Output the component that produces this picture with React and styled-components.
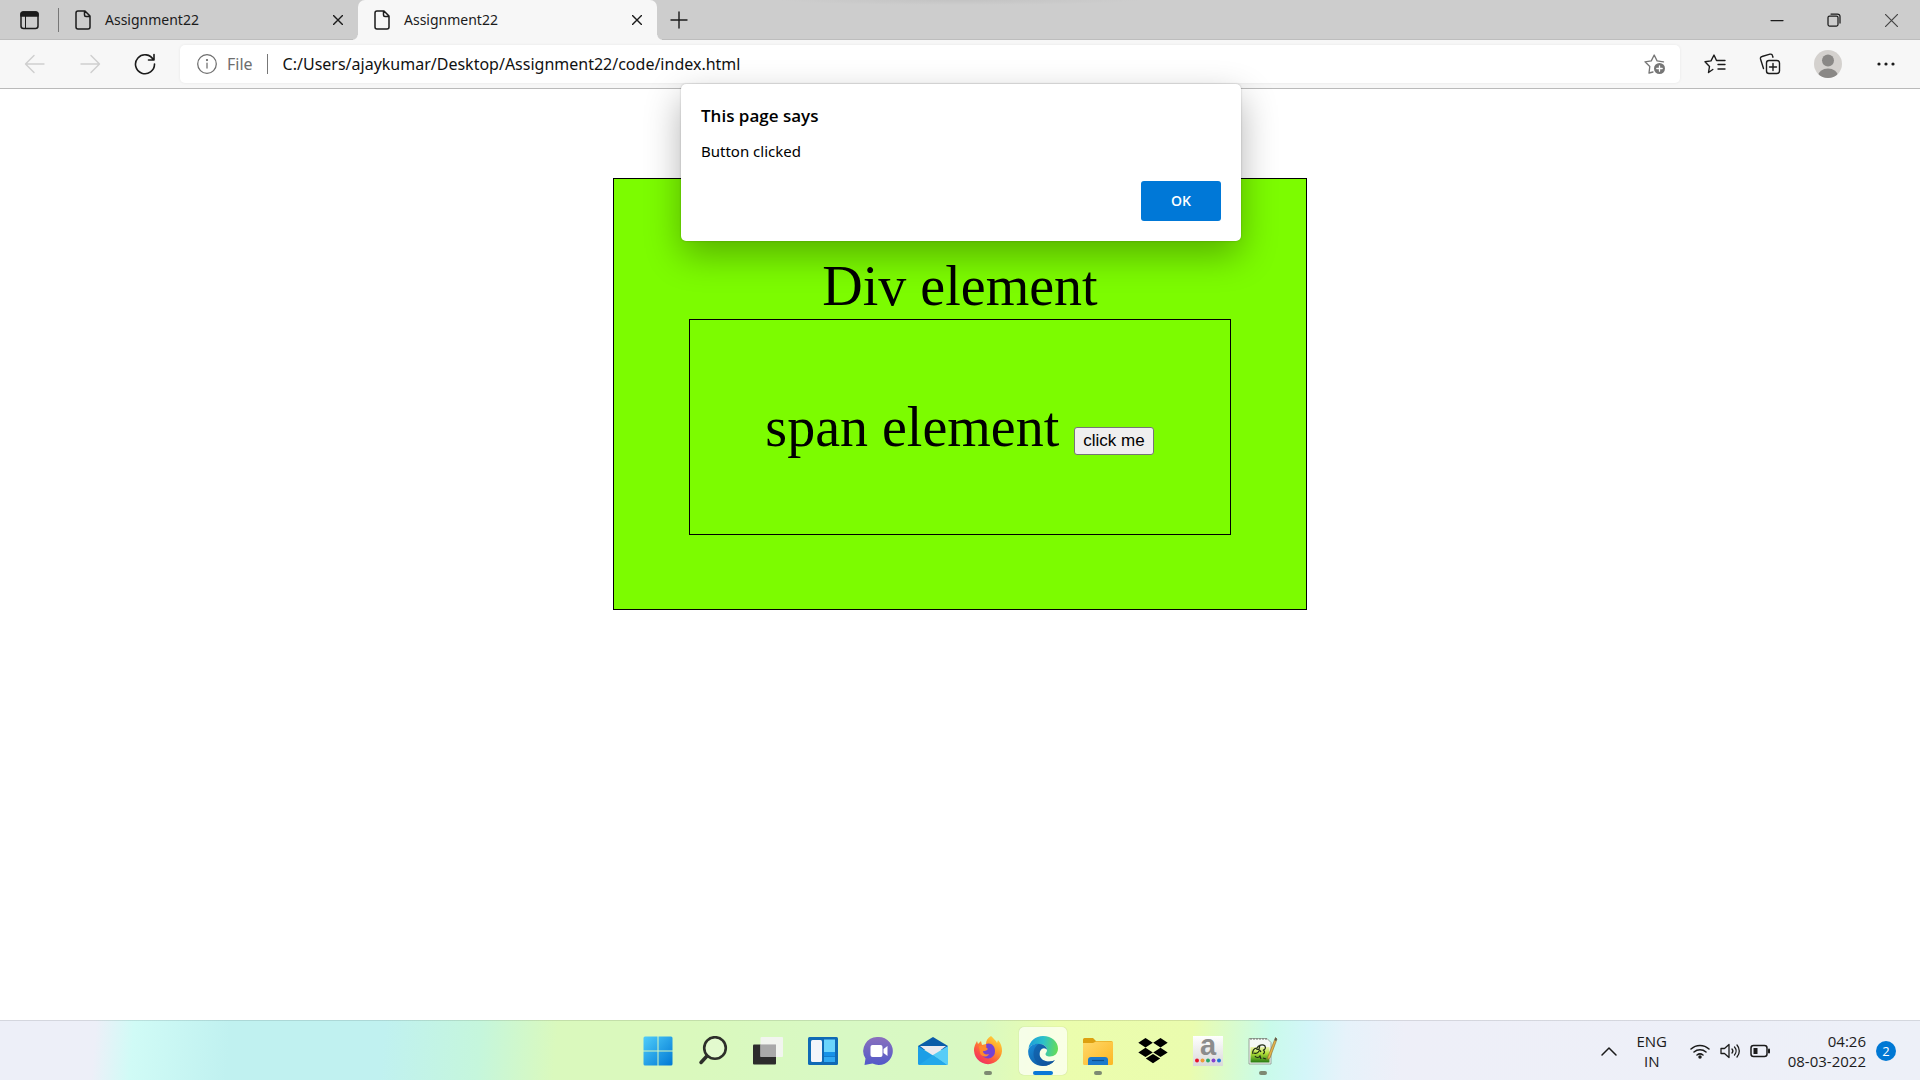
import React from "react";
import styled, { createGlobalStyle } from "styled-components";

const UI = `"Noto Sans", "Open Sans", sans-serif`;
const UI_ALT = `"Open Sans", "Noto Sans", sans-serif`;

const GlobalStyle = createGlobalStyle`
  *, *::before, *::after { box-sizing: border-box; }
  body { margin: 0; background: #fff; color: #1b1b1b; font-family: ${UI}; }
  button { font: inherit; color: inherit; }
`;

const Screen = styled.div`
  display: flex;
  flex-direction: column;
  min-height: 100vh;
`;

/* ---------- browser chrome ---------- */
const TabStrip = styled.header`
  display: flex;
  height: 40px;
  background: radial-gradient(180px 5px at 50% 0, #c3c3c3, #cdcdcd);
  box-shadow: inset 0 -1px 0 #bdbdbd;
`;

const IconButton = styled.button`
  display: flex;
  align-items: center;
  justify-content: center;
  flex: none;
  width: ${(p) => p.$w || 40}px;
  padding: 0;
  border: 0;
  background: none;
  color: ${(p) => p.$color || "#1b1b1b"};
`;

const StripDivider = styled.span`
  align-self: center;
  width: 1px;
  height: 24px;
  background: #777;
`;

const Tab = styled.div`
  position: relative;
  display: flex;
  align-items: center;
  width: 299px;
  padding-left: 14px;
  padding-right: 3px;
  border-radius: 7px 7px 0 0;
  background: ${(p) => (p.$active ? "#f7f7f7" : "transparent")};

  &::before,
  &::after {
    content: "";
    display: ${(p) => (p.$active ? "block" : "none")};
    position: absolute;
    bottom: 0;
    width: 5px;
    height: 5px;
  }
  &::before {
    right: 100%;
    background: radial-gradient(circle at 0 0, transparent 4px, #f7f7f7 5px);
  }
  &::after {
    left: 100%;
    background: radial-gradient(circle at 100% 0, transparent 4px, #f7f7f7 5px);
  }
`;

const TabTitle = styled.span`
  flex: 1;
  padding-left: 12px;
  font-size: 14px;
  line-height: 20px;
`;

const WindowControls = styled.div`
  display: flex;
  margin-left: auto;
`;

const Toolbar = styled.div`
  display: flex;
  align-items: center;
  height: 49px;
  padding: 0 8px;
  background: #f7f7f7;
  border-bottom: 1px solid #bababa;
`;

const ToolGroup = styled.div`
  display: flex;
  height: 38px;
`;

const AddressBar = styled.form`
  display: flex;
  flex: 1;
  align-items: center;
  height: 38px;
  margin: 0 7px 0 8px;
  padding-left: 17px;
  border-radius: 5px;
  background: #fff;
  box-shadow: 0 0 3px rgba(0, 0, 0, 0.07);
`;

const Scheme = styled.span`
  padding: 0 14px 0 10px;
  color: #6e6e6e;
  font-size: 16px;
`;

const SchemeDivider = styled.span`
  width: 1px;
  height: 20px;
  background: #777;
`;

const AddressInput = styled.input`
  flex: 1;
  min-width: 0;
  padding: 0 0 0 15px;
  border: 0;
  outline: 0;
  background: none;
  color: #111;
  font-family: ${UI};
  font-size: 16px;
  line-height: 22px;
`;

/* ---------- page ---------- */
const Page = styled.main`
  position: relative;
  flex: 1;
  padding-top: 89px;
  font-family: "Liberation Serif", "Times New Roman", serif;
  font-size: 56px;
  line-height: 65px;
  color: #000;
  text-align: center;
`;

const OuterBox = styled.div`
  width: fit-content;
  margin: 0 auto;
  padding: 75px 75px 74px;
  border: 1px solid #000;
  background: #7cfc00;
`;

const InnerBox = styled.div`
  padding: 75px 75px 74px;
  border: 1px solid #000;
`;

const ClickButton = styled.button`
  height: 28px;
  margin: 0 1px;
  padding: 0 8px;
  border: 1px solid #767676;
  border-radius: 3px;
  background: #efefef;
  color: #000;
  font-family: "Liberation Sans", Arial, sans-serif;
  font-size: 17px;
  line-height: 20px;
`;

const Dialog = styled.section`
  position: absolute;
  top: -5px;
  left: 50%;
  width: 560px;
  margin-left: -279px;
  padding: 20px;
  border-radius: 5px;
  background: #fff;
  box-shadow: 0 0 2px rgba(0, 0, 0, 0.25), 0 14px 36px rgba(0, 0, 0, 0.3);
  font-family: ${UI};
  text-align: left;
`;

const DialogTitle = styled.h1`
  margin: 0;
  font-family: ${UI_ALT};
  font-size: 17px;
  font-weight: 600;
  line-height: 24px;
`;

const DialogText = styled.p`
  margin: 12px 0 18px;
  font-size: 15px;
  line-height: 23px;
`;

const DialogActions = styled.div`
  display: flex;
  justify-content: flex-end;
`;

const OkButton = styled.button`
  width: 80px;
  height: 40px;
  border: 0;
  border-radius: 3px;
  background: #0078d7;
  color: #fff;
  font-family: ${UI_ALT};
  font-size: 14px;
  font-weight: 600;
  line-height: 20px;
`;

/* ---------- taskbar ---------- */
const Taskbar = styled.footer`
  display: grid;
  grid-template-columns: 1fr auto 1fr;
  height: 60px;
  border-top: 1px solid rgba(0, 0, 0, 0.1);
  background: linear-gradient(95deg, #edeff8 0%, #edeff8 5%, #d0fbf6 7%, #c0f1f0 12%, #c0f1f0 20%,
    #c5f6dc 25%, #daf9bd 29%, #daf9bd 36%, #d8f9c4 44%, #d9f9c2 51%, #ebfdad 55%, #eafcae 62%,
    #c9fbea 66%, #d3f6f9 68%, #e6f2fa 70%, #eeeff8 73%, #edf0f8 100%);
`;

const Apps = styled.nav`
  grid-column: 2;
  display: flex;
  align-items: center;
  gap: 7px;
  padding-left: 1px;
`;

const AppButton = styled.button`
  display: flex;
  flex-direction: column;
  align-items: center;
  width: 48px;
  height: 48px;
  padding: 9px 0 0;
  border: 0;
  border-radius: 5px;
  background: ${(p) => (p.$active ? "rgba(255,255,255,0.68)" : "none")};
  box-shadow: ${(p) => (p.$active ? "0 0 1px rgba(0,0,0,0.3)" : "none")};
`;

const Indicator = styled.span`
  width: ${(p) => (p.$active ? 20 : 8)}px;
  height: 4px;
  margin-top: 5px;
  border-radius: 2px;
  background: ${(p) => (p.$active ? "#0a78d6" : "#7d8a72")};
`;

const Tray = styled.div`
  display: flex;
  align-items: center;
  justify-content: flex-end;
  padding-right: 24px;
  font-family: ${UI_ALT};
  font-size: 15px;
  line-height: 20px;
`;

const Language = styled.span`
  width: 48px;
  margin: 0 14px 0 10px;
  text-align: center;
`;

const TrayIcons = styled.span`
  display: flex;
  align-items: center;
  gap: 10px;
`;

const Clock = styled.time`
  margin: 0 10px 0 18px;
  text-align: right;
`;

const Badge = styled.span`
  width: 20px;
  height: 20px;
  border-radius: 50%;
  background: #0078d4;
  color: #fff;
  font-size: 13px;
  text-align: center;
`;

/* ---------- drawings ---------- */
const Line = ({ size = 20, children, w = 1.25, ...rest }) => (
  <svg width={size} height={size} viewBox={`0 0 ${size} ${size}`} fill="none" stroke="currentColor" strokeWidth={w} strokeLinejoin="round" strokeLinecap="round" aria-hidden="true" {...rest}>
    {children}
  </svg>
);

const PageIcon = () => (
  <Line w={1.5}>
    <path d="M5 1h7l5 5v11a2 2 0 0 1-2 2H5a2 2 0 0 1-2-2V3a2 2 0 0 1 2-2zM11.500 1v4a1.500 1.500 0 0 0 1.500 1.500h4" />
  </Line>
);

const CloseIcon = ({ size = 10, w = 1.4 }) => (
  <Line size={size} w={w} strokeLinecap="butt">
    <path d={`M0 0L${size} ${size}M${size} 0L0 ${size}`} />
  </Line>
);

const APPS = [
  { name: "Start", art: (
    <svg width="30" height="30" viewBox="0 0 30 30">
      <defs><linearGradient id="win" x1="0" y1="0" x2="1" y2="1" gradientUnits="objectBoundingBox"><stop stopColor="#4fcdfa" /><stop offset="1" stopColor="#0078d4" /></linearGradient></defs>
      <path fill="url(#win)" d="M2 .5h12.500v14H.500V2A1.500 1.500 0 0 1 2 .5zM15.500.5H28A1.500 1.500 0 0 1 29.500 2v12.500h-14zM.500 15.500h14v14H2A1.500 1.500 0 0 1 .5 28zM15.500 15.500h14V28a1.500 1.500 0 0 1-1.500 1.500H15.500z" />
    </svg>) },
  { name: "Search", art: (
    <svg width="30" height="30" viewBox="0 0 30 30" fill="none" stroke="#2d2f2a">
      <circle cx="17" cy="12" r="10.800" strokeWidth="2.600" fill="#fff" fillOpacity=".25" />
      <path d="M9 20L3 26.500" strokeWidth="3.500" strokeLinecap="round" />
    </svg>) },
  { name: "Task view", art: (
    <svg width="30" height="30" viewBox="0 0 30 30">
      <rect x="0" y="8.500" width="23" height="20" rx="1" fill="#2c2c2c" />
      <rect x="7.500" y="1" width="22.500" height="20" rx="1" fill="#f4f4f4" fillOpacity=".9" />
      <path d="M7.500 8.500H23V21H7.500z" fill="#a9a9a9" />
    </svg>) },
  { name: "Widgets", art: (
    <svg width="30" height="30" viewBox="0 0 30 30">
      <rect y="1" width="30" height="28" rx="1.500" fill="#0f6ab5" />
      <rect x="3" y="4" width="11" height="22" rx="1.500" fill="#f3f5fa" />
      <path d="M16 3.500h11V16H16z" fill="#6bd5fc" /><path d="M16 16h11v4.500H16z" fill="#1692e8" /><path d="M16 21h11v5H16z" fill="#2fa9f2" />
    </svg>) },
  { name: "Chat", art: (
    <svg width="30" height="30" viewBox="0 0 30 30">
      <defs><linearGradient id="chat" x1="0" y1="0" x2="0" y2="1"><stop stopColor="#8a70bd" /><stop offset="1" stopColor="#5259c9" /></linearGradient></defs>
      <path d="M15.500 1a14 14 0 1 1-6 26.500L1.500 29l1-6.500A14 14 0 0 1 15.500 1z" fill="url(#chat)" />
      <rect x="7.500" y="9" width="12" height="12" rx="2" fill="#fff" /><path d="M20.500 13l4-3v10l-4-3z" fill="#fff" />
    </svg>) },
  { name: "Mail", art: (
    <svg width="30" height="30" viewBox="0 0 30 30">
      <path d="M0 10L15 1l15 9v4H0z" fill="#0b5ca8" /><path d="M2 10h26L15 20z" fill="#eceaf0" />
      <path d="M0 10l30 19H1.500A1.500 1.500 0 0 1 0 27.500z" fill="#1c9ee6" /><path d="M30 10v17.500a1.500 1.500 0 0 1-1.500 1.500L15 19z" fill="#57cdf7" /><path d="M15 19l14 10H1z" fill="#23a8ea" />
    </svg>) },
  { name: "Firefox", running: true, art: (
    <svg width="30" height="30" viewBox="0 0 30 30">
      <defs><linearGradient id="fox" x1=".9" y1="0" x2=".2" y2="1"><stop stopColor="#ffe13e" /><stop offset=".4" stopColor="#ff9a2b" /><stop offset=".75" stopColor="#fb4c48" /><stop offset="1" stopColor="#ee2c6b" /></linearGradient></defs>
      <path d="M18 0c2 2 3 3 5 5l1 2 1-3c3 3 4 7 4 11A14 14 0 1 1 2 9l2-4 1 3 3-3 1 4 4-1c0-4 2-6 5-8z" fill="url(#fox)" />
      <path d="M13 8c5-2 9 2 9 7a7 7 0 0 1-14 1c0-2 1-3 3-3 2-1 3-2 2-5z" fill="#7542d4" /><path d="M6 10c4-1 7 1 9 3-2 2-3 2-5 2 0 3 3 4 6 3-2 4-8 3-9-1z" fill="#ff8b2c" />
    </svg>) },
  { name: "Edge", running: true, active: true, art: (
    <svg width="30" height="30" viewBox="0 0 30 30">
      <defs>
        <linearGradient id="edgeTop" x1="0" y1=".3" x2="1" y2=".4"><stop stopColor="#1c9ddb" /><stop offset=".5" stopColor="#2cc1c9" /><stop offset="1" stopColor="#66dc58" /></linearGradient>
        <linearGradient id="edgeLow" x1="0" y1="0" x2="1" y2="1"><stop stopColor="#1a8edb" /><stop offset="1" stopColor="#0b4a91" /></linearGradient>
      </defs>
      <path d="M.5 12.500C1.500 5 7.500 0 15 0c9 0 15 6 15 12.500 0 5-3.500 8-8 8-3.500 0-4.500-1.500-4.500-2.500s1.500-1.500 1.500-4c0-3-3-6-8-6S2 9.500.5 12.500z" fill="url(#edgeTop)" />
      <path d="M.2 14.500C1 10 5 7.800 10 7.800c5 0 8.800 3 9 6-1-1.500-3-1.800-4-1.500-2 .7-3.500 3-3.500 5.700 0 5 5 7.500 9.500 7.500 3 0 5-1 6-1.500C24 28 19.500 30 15 30 6.500 30-.5 23 .2 14.500z" fill="url(#edgeLow)" />
      <path d="M10.500 8c-3 2-5 5.500-5 9.500 0 6 4 11 9 12.500 5 0 9.500-2 12.500-6-1 .5-3 1.500-6 1.500-4.500 0-9.500-2.500-9.500-7.500 0-2.700 1.500-5 3.500-5.700 1-.3 3 0 4 1.500-.2-3-3.800-6-8.500-5.800z" fill="#10559f" fillOpacity=".6" />
    </svg>) },
  { name: "File Explorer", running: true, art: (
    <svg width="30" height="30" viewBox="0 0 30 30">
      <defs><linearGradient id="folder" x1="0" y1="0" x2="1" y2="1"><stop stopColor="#ffd869" /><stop offset="1" stopColor="#fcb723" /></linearGradient></defs>
      <path d="M0 3.500A1.500 1.500 0 0 1 1.500 2H10l3 3h15.500L30 7v3H0z" fill="#dda010" />
      <path d="M0 7h10l3-1.500h17v22a1.500 1.500 0 0 1-1.500 1.500h-27A1.500 1.500 0 0 1 0 27.500z" fill="url(#folder)" />
      <path d="M5 29v-5a3 3 0 0 1 3-3h14a3 3 0 0 1 3 3v5z" fill="#1b79cb" /><path d="M9 24.500h12" stroke="#0c4f91" strokeWidth="1.200" />
    </svg>) },
  { name: "Dropbox", art: (
    <svg width="30" height="30" viewBox="0 0 30 30">
      <path d="M7.500 2l7.300 4.700-7.300 4.700L.3 6.700zM22.500 2l7.200 4.700-7.200 4.700-7.300-4.700zM7.500 11.700l7.300 4.700-7.300 4.600L.3 16.400zM22.500 11.700l7.200 4.700-7.200 4.600-7.300-4.600zM15 18l7.200 4.600L15 27.300l-7.200-4.700z" />
    </svg>) },
  { name: "Amazon", art: (
    <svg width="30" height="30" viewBox="0 0 30 30" overflow="visible">
      <defs><linearGradient id="amz" x1="0" y1="0" x2="0" y2="1"><stop stopColor="#fff" /><stop offset="1" stopColor="#d9d9d9" /></linearGradient></defs>
      <rect width="30" height="30" fill="url(#amz)" />
      <text x="15" y="19" textAnchor="middle" fontFamily="Liberation Sans, Arial, sans-serif" fontWeight="700" fontSize="29" fill="#8c8c8c">a</text>
      <circle cx="4" cy="24.500" r="2" fill="#e8132b" /><circle cx="9.500" cy="24.500" r="2" fill="#f09a37" /><circle cx="15" cy="24.500" r="2" fill="#2ba866" /><circle cx="20.500" cy="24.500" r="2" fill="#8540cf" /><circle cx="26" cy="24.500" r="2" fill="#1d74d6" />
    </svg>) },
  { name: "Notepad++", running: true, art: (
    <svg width="30" height="30" viewBox="0 0 30 30">
      <defs><linearGradient id="npp" x1="0" y1="0" x2="0" y2="1"><stop stopColor="#eef3b4" /><stop offset=".4" stopColor="#b5e03a" /><stop offset="1" stopColor="#237a10" /></linearGradient></defs>
      <path d="M1 2.500h18l4 4V28H1z" fill="#f6f8f6" stroke="#889088" strokeWidth=".8" />
      <path d="M3 2v2M6 2v2M9 2v2M12 2v2M15 2v2M18 2v2" stroke="#6f776f" />
      <path d="M2.500 11h19v15.500h-19z" fill="url(#npp)" />
      <path d="M5 18c-1-3 1-6 4-6 1-3 6-4 8-2 1 2 0 4-2 4 2 1 2 3 0 4M6 17c2 1 4 0 5-2M8 13c2 0 4 1 5 3M12 9l-1 4M7 20c1 2 4 2 5 0l1 3M15 22l3 1" fill="none" stroke="#222c18" strokeWidth="1.200" />
      <path d="M27.500 1.500L29 3l-7 19-2.500 1.500.5-3z" fill="#e5b44a" stroke="#8b6b2e" strokeWidth=".6" /><path d="M27.500 1.500L29 3l-1 2-1.500-1z" fill="#555" />
    </svg>) },
];

export default function App() {
  return (
    <Screen>
      <GlobalStyle />
      <TabStrip>
        <IconButton $w={58} aria-label="Tab actions">
          <Line w={1.5}>
            <rect x="2" y="2" width="17" height="16.500" rx="2.500" /><path d="M2 6V4.500A2.500 2.500 0 0 1 4.500 2h12A2.500 2.500 0 0 1 19 4.500V6z" fill="currentColor" /><path d="M6.500 6v12" strokeWidth="1" />
          </Line>
        </IconButton>
        <StripDivider />
        <Tab>
          <PageIcon />
          <TabTitle>Assignment22</TabTitle>
          <IconButton $w={34} aria-label="Close tab"><CloseIcon /></IconButton>
        </Tab>
        <Tab $active>
          <PageIcon />
          <TabTitle>Assignment22</TabTitle>
          <IconButton $w={34} aria-label="Close tab"><CloseIcon /></IconButton>
        </Tab>
        <IconButton $w={44} aria-label="New tab">
          <Line size={18} w={1.4}><path d="M9 1v16M1 9h16" /></Line>
        </IconButton>
        <WindowControls>
          <IconButton $w={57} aria-label="Minimize"><Line size={14}><path d="M1 7.500h12" /></Line></IconButton>
          <IconButton $w={57} aria-label="Restore">
            <Line size={14}><rect x="1" y="3" width="10" height="10" rx="1.500" /><path d="M4 1h6.500A2.500 2.500 0 0 1 13 3.500V10" /></Line>
          </IconButton>
          <IconButton $w={58} $color="#444" aria-label="Close"><CloseIcon size={13} w={1.2} /></IconButton>
        </WindowControls>
      </TabStrip>

      <Toolbar>
        <ToolGroup>
          <IconButton $w={54} $color="#cfcfcf" aria-label="Back"><Line size={22} w={1.4}><path d="M20 11H2M10 2.500L1.500 11l8.500 8.500" /></Line></IconButton>
          <IconButton $w={55} $color="#cfcfcf" aria-label="Forward"><Line size={22} w={1.4}><path d="M2 11h18M12 2.500l8.500 8.500-8.500 8.500" /></Line></IconButton>
          <IconButton $w={55} aria-label="Refresh"><Line size={22} w={1.6}><path d="M19.500 7A9.500 9.500 0 1 0 20.500 11M20 1.500V7h-5.500" /></Line></IconButton>
        </ToolGroup>
        <AddressBar onSubmit={(e) => e.preventDefault()}>
          <Line color="#6e6e6e"><circle cx="10" cy="10" r="9.300" /><path d="M10 9v5" /><circle cx="10" cy="6" r=".5" fill="currentColor" /></Line>
          <Scheme>File</Scheme>
          <SchemeDivider />
          <AddressInput aria-label="Address" defaultValue="C:/Users/ajaykumar/Desktop/Assignment22/code/index.html" />
          <IconButton $w={50} $color="#767676" type="button" aria-label="Add to favorites">
            <Line size={22} w={1.3}>
              <path d="M9 19l-4 1 .8-6.500L1 8.800l6.300-.9L10.200 2l2.900 5.900 6.400.9" />
              <circle cx="15.500" cy="15.500" r="5.500" fill="currentColor" stroke="none" /><path d="M15.500 12.800v5.400M12.800 15.500h5.400" stroke="#fff" />
            </Line>
          </IconButton>
        </AddressBar>
        <ToolGroup>
          <IconButton $w={56} aria-label="Favorites">
            <Line size={22} w={1.4}><path d="M8.800 16.500L4.500 19.500l1-6L1 8.800l6-.9L10 2l2.500 5.500H21M14 11.500h7M14 16h7" /></Line>
          </IconButton>
          <IconButton $w={54} aria-label="Collections">
            <Line size={22} w={1.4}><rect x="7.500" y="7.500" width="13" height="13" rx="2.500" /><path d="M14 10.500v7M10.500 14h7M4.500 15.500L1.500 6A2 2 0 0 1 3 3.500l8-2.300a2 2 0 0 1 2.500 1.500l.5 1.500" /></Line>
          </IconButton>
          <IconButton $w={62} aria-label="Profile">
            <svg width="28" height="28" viewBox="0 0 28 28"><defs><clipPath id="face"><circle cx="14" cy="14" r="14" /></clipPath></defs><g clipPath="url(#face)"><path d="M0 0h28v28H0z" fill="#d4d1ce" /><circle cx="14" cy="10.500" r="6" fill="#8a8886" /><ellipse cx="14" cy="26" rx="10" ry="7.500" fill="#8a8886" /></g></svg>
          </IconButton>
          <IconButton $w={53} aria-label="Settings and more">
            <svg width="18" height="4" viewBox="0 0 18 4" fill="currentColor"><circle cx="2" cy="2" r="1.600" /><circle cx="9" cy="2" r="1.600" /><circle cx="16" cy="2" r="1.600" /></svg>
          </IconButton>
        </ToolGroup>
      </Toolbar>

      <Page>
        <OuterBox>
          Div element
          <InnerBox>
            span element <ClickButton>click me</ClickButton>
          </InnerBox>
        </OuterBox>
        <Dialog role="alertdialog" aria-labelledby="dialog-title">
          <DialogTitle id="dialog-title">This page says</DialogTitle>
          <DialogText>Button clicked</DialogText>
          <DialogActions><OkButton>OK</OkButton></DialogActions>
        </Dialog>
      </Page>

      <Taskbar>
        <Apps>
          {APPS.map((app) => (
            <AppButton key={app.name} $active={app.active} aria-label={app.name}>
              {app.art}
              {app.running && <Indicator $active={app.active} />}
            </AppButton>
          ))}
        </Apps>
        <Tray>
          <Line size={18} w={1.5}><path d="M2 13l7-7 7 7" /></Line>
          <Language>ENG<br />IN</Language>
          <TrayIcons>
            <Line w={1.5}><path d="M1 8a13 13 0 0 1 18 0M4 11a9 9 0 0 1 12 0M7 14a5 5 0 0 1 6 0" /><circle cx="10" cy="16" r="1" fill="currentColor" /></Line>
            <Line w={1.3}><path d="M1 7.500h3.500L9 3.500v13l-4.500-4H1zM12 8a3 3 0 0 1 0 4M14.500 6a6 6 0 0 1 0 8M17 4a9 9 0 0 1 0 12" /></Line>
            <Line w={1.5}><rect x="1" y="4.500" width="16" height="11" rx="2.500" /><rect x="3.500" y="7" width="4" height="6" fill="currentColor" stroke="none" /><path d="M19 8.500v3" strokeWidth="2" /></Line>
          </TrayIcons>
          <Clock>04:26<br />08-03-2022</Clock>
          <Badge>2</Badge>
        </Tray>
      </Taskbar>
    </Screen>
  );
}
